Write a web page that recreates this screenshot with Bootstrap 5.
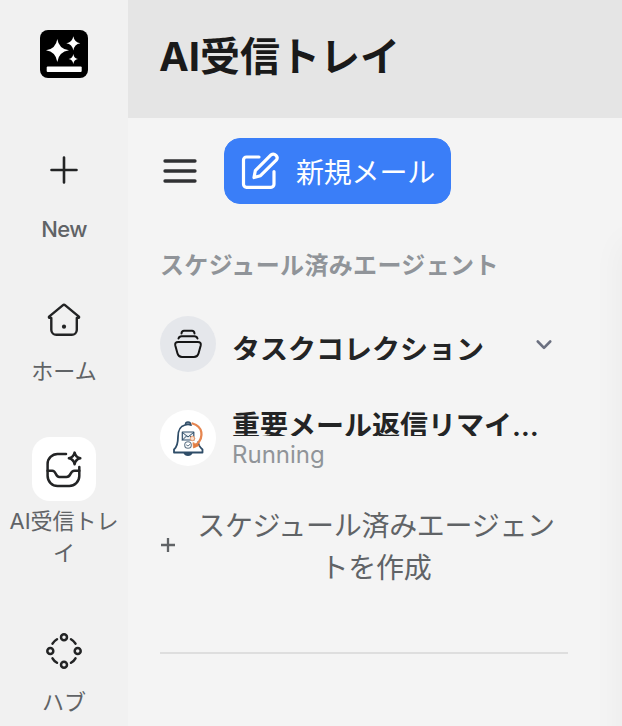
<!DOCTYPE html>
<html lang="ja">

<head>
    <meta charset="UTF-8">
    <meta name="viewport" content="width=device-width, initial-scale=1.0">
    <title>AI受信トレイ</title>
    <link href="https://cdn.jsdelivr.net/npm/bootstrap@5.3.0/dist/css/bootstrap.min.css" rel="stylesheet">
    <style>
        body {
            height: 726px;
            font-family: Inter, "Noto Sans CJK JP", sans-serif;
            background-color: #f4f4f4;
            color: #232425;
        }

        .side-menu {
            width: 128px;
            padding-top: 30px;
            background-color: #f1f1f1;
        }

        .app-logo {
            margin-bottom: 60px;
        }

        .side-item {
            width: 112px;
            margin-bottom: 50px;
            font-size: 22px;
            line-height: 32px;
            color: #606366;
        }

        .side-item.new-item {
            margin-bottom: 43px;
            font-weight: 500;
            letter-spacing: -.7px;
        }

        .side-icon {
            width: 64px;
            height: 64px;
            margin-bottom: 3px;
            border-radius: 18px;
        }

        .side-icon.bg-white {
            margin-bottom: 4px;
        }

        .new-item .side-icon {
            margin-bottom: 11px;
        }

        .page-head {
            height: 118px;
            padding: 0 31px 4px;
            background-color: #e5e5e5;
        }

        .page-head h1 {
            font-size: 40px;
            line-height: 60px;
            color: #1a1a1a;
        }

        .inbox-column {
            width: 472px;
            padding: 20px 32px 0;
        }

        .btn-compose {
            --bs-btn-color: #fff;
            --bs-btn-bg: #3a7ef8;
            --bs-btn-border-color: #3a7ef8;
            --bs-btn-border-radius: 16px;
            width: 227px;
            height: 66px;
            margin-left: 24px;
            font-size: 28px;
            line-height: 40px;
        }

        .btn-compose span {
            padding: 3px 0 0 1px;
            letter-spacing: -.2px;
        }

        .section-label {
            margin-top: 44px;
            font-size: 24px;
            font-weight: 600;
            line-height: 36px;
            letter-spacing: .35px;
            color: #909499;
        }

        .agent-row.running {
            margin-top: 36px;
        }

        .agent-avatar {
            width: 56px;
            height: 56px;
            margin-right: 16px;
            background-color: #fff;
        }

        .running .agent-avatar {
            margin-top: 2px;
        }

        .agent-avatar.tasks {
            background-color: #e5e7eb;
        }

        /* box is lower than its line, the bottoms of the glyphs get cut */
        .agent-name {
            height: 28px;
            font-size: 28px;
            font-weight: 600;
            line-height: 36px;
        }

        .tasks + .agent-name {
            margin-top: 4px;
        }

        .agent-toggle {
            margin-top: 2px;
        }

        .agent-state {
            font-size: 24px;
            line-height: 38px;
            color: #909499;
        }

        .add-agent {
            margin-top: 27px;
            font-size: 28px;
            line-height: 42px;
            letter-spacing: -.3px;
            color: #606366;
        }

        .add-agent span {
            padding-top: 4px;
        }

        .divider {
            height: 2px;
            margin-top: 63px;
            background-color: #dedede;
        }

        .next-pane {
            width: 200px;
            margin: 124px 0 -100px 22px;
            box-shadow: 0 0 32px rgba(0, 0, 0, .045);
        }
    </style>
</head>

<body class="d-flex overflow-hidden">

    <nav class="side-menu d-flex flex-column align-items-center flex-shrink-0">
        <svg class="app-logo flex-shrink-0" width="48" height="48" viewBox="0 0 48 48">
            <rect width="48" height="48" rx="8" fill="#000" />
            <g fill="#fff">
                <path d="M17.3 9Q18.8 19 29 20.3Q18.8 21.8 17.3 32Q15.8 21.8 6 20.3Q15.8 19 17.3 9Z" />
                <path d="M33.3 6.3Q34.3 12.3 40.3 13.3Q34.3 14.3 33.3 20.6Q32.3 14.3 26.3 13.3Q32.3 12.3 33.3 6.3Z" />
                <path d="M33.3 24Q34 28.3 38 29Q34 29.7 33.3 34Q32.6 29.7 28.6 29Q32.6 28.3 33.3 24Z" />
                <rect x="6.7" y="36.5" width="35" height="5.4" rx="1" />
            </g>
        </svg>

        <div class="side-item new-item text-center">
            <div class="side-icon mx-auto d-flex align-items-center justify-content-center">
                <svg width="36" height="36" viewBox="0 0 36 36" fill="none" stroke="#232425" stroke-width="2.6" stroke-linecap="round">
                    <path d="M18 5.5v25M5.5 18h25" />
                </svg>
            </div>
            <span>New</span>
        </div>

        <div class="side-item text-center">
            <div class="side-icon mx-auto d-flex align-items-center justify-content-center">
                <svg width="36" height="36" viewBox="0 0 36 36" fill="none" stroke="#232425" stroke-width="2.4" stroke-linecap="round" stroke-linejoin="round">
                    <path d="M5.3 15.900H3.500a.7.7 0 0 1-.4-1.200L16.700 3.300a2 2 0 0 1 2.600 0L32.900 14.700a.7.7 0 0 1-.4 1.200H30.800V28a5 5 0 0 1-5 4.800H10.300a5 5 0 0 1-5-4.800Z" />
                    <circle cx="18" cy="24.700" r="2.100" fill="#232425" stroke="none" />
                </svg>
            </div>
            <span>ホーム</span>
        </div>

        <div class="side-item text-center">
            <div class="side-icon bg-white mx-auto d-flex align-items-center justify-content-center">
                <svg width="38" height="38" viewBox="0 0 38 38" fill="none" stroke="#232425" stroke-width="2.500" stroke-linecap="round" stroke-linejoin="round">
                    <path d="M21 4H12.500A10 10 0 0 0 2.600 14V26A10 10 0 0 0 12.600 36H24A10 10 0 0 0 34.300 26V17" />
                    <path d="M2.600 20.700H7.300C11.500 20.700 10 27 14.300 27H21.500C26.500 27 24.500 20.700 29.500 20.700H34.300" />
                    <path d="M29.600 2.600Q30.600 7.300 35.300 8.300Q30.600 9.300 29.600 14.200Q28.600 9.300 23.900 8.300Q28.600 7.300 29.600 2.600Z" />
                </svg>
            </div>
            <span>AI受信トレイ</span>
        </div>

        <div class="side-item text-center">
            <div class="side-icon mx-auto d-flex align-items-center justify-content-center">
                <svg width="38" height="38" viewBox="0 0 38 38" fill="none" stroke="#232425" stroke-width="2.500" stroke-linecap="round">
                    <circle cx="19" cy="5.300" r="3" />
                    <circle cx="5.300" cy="19" r="3" />
                    <circle cx="32.700" cy="19" r="3" />
                    <circle cx="19" cy="32.700" r="3" />
                    <path d="M7.500 11.700Q9 9 12 7.200M26 7.200Q29 9 30.500 11.700M7.500 26.300Q9 29 12 30.800M26 30.800Q29 29 30.500 26.300" />
                </svg>
            </div>
            <span>ハブ</span>
        </div>
    </nav>

    <main class="d-flex flex-column flex-grow-1 overflow-hidden">
        <header class="page-head d-flex align-items-center flex-shrink-0">
            <h1 class="fw-bold m-0">AI受信トレイ</h1>
        </header>

        <div class="d-flex flex-grow-1 overflow-hidden">
            <div class="inbox-column flex-shrink-0">
                <div class="d-flex align-items-center">
                    <svg width="40" height="40" viewBox="0 0 40 40" stroke="#303133" stroke-width="3.300" stroke-linecap="round">
                        <path d="M5 10H35M5 20H35M5 30H35" />
                    </svg>
                    <button type="button" class="btn btn-compose d-flex align-items-center p-0 ps-3">
                        <svg class="me-3" width="38" height="38" viewBox="0 0 38 38" fill="none" stroke="#fff" stroke-width="3.200" stroke-linecap="round" stroke-linejoin="round">
                            <path d="M18 5H5.500A3 3 0 0 0 2.500 8V32.300A3 3 0 0 0 5.500 35.300H30A3 3 0 0 0 33 32.300V19.500" />
                            <path d="M13 25.500L14.300 18.700L30 2.900C33.500 .5 38 4.800 35.200 8.200L19.500 23.700Z" />
                        </svg>
                        <span>新規メール</span>
                    </button>
                </div>

                <div class="section-label text-nowrap">スケジュール済みエージェント</div>

                <div class="agent-row d-flex align-items-center mt-4 pt-2">
                    <div class="agent-avatar tasks rounded-circle d-flex align-items-center justify-content-center flex-shrink-0">
                        <svg width="32" height="32" viewBox="0 0 32 32" fill="none" stroke="#151515" stroke-width="2" stroke-linecap="round" stroke-linejoin="round">
                            <path d="M9.500 5.500Q9.700 2.800 12 2.800H20Q22.300 2.800 22.500 5.500M6.500 10.500Q7.300 8.300 9.500 8.300H22.500Q24.700 8.300 25.500 10.500" />
                            <path d="M6.200 14H25.800Q29.500 14 28.700 17.500L26.500 25.500Q25.500 29 22 29H10Q6.500 29 5.500 25.500L3.300 17.500Q2.500 14 6.200 14Z" />
                        </svg>
                    </div>
                    <div class="agent-name flex-grow-1 overflow-hidden text-nowrap">タスクコレクション</div>
                    <svg class="agent-toggle me-3" width="16" height="16" viewBox="0 0 16 16" fill="none" stroke="#6b7080" stroke-width="2.600" stroke-linecap="round" stroke-linejoin="round">
                        <path d="M1.800 4.500L8 10.800L14.200 4.500" />
                    </svg>
                </div>

                <div class="agent-row running d-flex align-items-start">
                    <div class="agent-avatar rounded-circle d-flex align-items-center justify-content-center flex-shrink-0">
                        <svg width="36" height="40" viewBox="0 0 36 40" fill="none" stroke="#2f4d68" stroke-linecap="round" stroke-linejoin="round">
                            <path d="M21 7Q18 5.500 15 7C9 8.500 8 13 8 19C8 26 7 29 4 31.500V34.500H32.500V31.500C30 29.500 28.500 27.500 28.300 24" stroke-width="1.800" />
                            <path d="M15.500 6.500Q15.500 4 18 4Q20.500 4 20.500 6.500" stroke-width="1.500" />
                            <path d="M13.500 35H22.500Q21.500 38 18 38Q14.500 38 13.500 35Z" fill="#2f4d68" stroke="none" />
                            <rect x="12.300" y="14" width="11.500" height="8" stroke-width="1.200" fill="#edf1f4" />
                            <path d="M12.500 14.500L18 19L23.500 14.500M12.500 22L16.500 18M23.500 22L20 18" stroke-width="1" />
                            <circle cx="18" cy="27" r="3.300" stroke-width="1.100" stroke="#64788a" />
                            <path d="M16.500 27L18 28L20 26.300" stroke-width="1" stroke="#64788a" />
                            <circle cx="22.500" cy="20.500" r="2.200" stroke-width="1" stroke="#e99b6c" fill="#f8e2d3" />
                            <path d="M22.500 5.500C33 8.500 34 19 27 26" stroke="#e68650" stroke-width="2.300" />
                            <path d="M23 25L23.500 30L29 27.500Z" fill="#e27b3f" stroke="#e27b3f" stroke-width=".8" />
                        </svg>
                    </div>
                    <div class="flex-grow-1 overflow-hidden">
                        <div class="agent-name overflow-hidden text-nowrap">重要メール返信リマイ…</div>
                        <div class="agent-state">Running</div>
                    </div>
                </div>

                <div class="add-agent d-flex align-items-center">
                    <svg class="flex-shrink-0" width="16" height="16" viewBox="0 0 16 16" stroke="#606366" stroke-width="2.300">
                        <path d="M8 1v14M1 8h14" />
                    </svg>
                    <span class="flex-grow-1 text-center ps-2">スケジュール済みエージェントを作成</span>
                </div>

                <div class="divider"></div>
            </div>
            <div class="next-pane flex-shrink-0"></div>
        </div>
    </main>

    <script src="https://cdn.jsdelivr.net/npm/bootstrap@5.3.0/dist/js/bootstrap.bundle.min.js"></script>
</body>

</html>
